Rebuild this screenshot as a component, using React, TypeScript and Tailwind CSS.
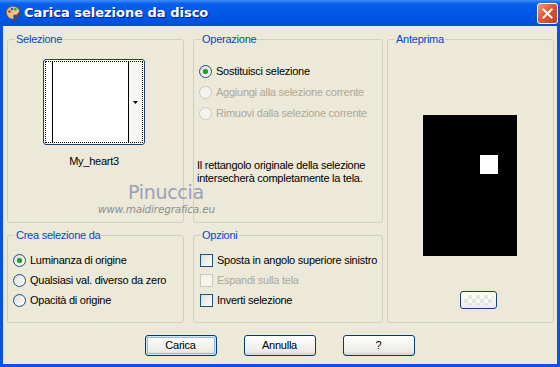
import React from 'react';

const Group: React.FC<{ label: string; className?: string; children?: React.ReactNode }> = ({ label, className, children }) => (
  <div className={`relative border border-[#d0d0bf] rounded-[3px] ${className ?? ''}`}>
    <span className="absolute left-[7px] -top-[8px] px-[1px] bg-[#ece9d8] text-[#0046d5] leading-[14px]">{label}</span>
    {children}
  </div>
);

const Radio: React.FC<{ checked?: boolean; disabled?: boolean; label: string }> = ({ checked, disabled, label }) => (
  <div className="flex items-center gap-[4px] h-[13px]">
    <span
      className={`w-[13px] h-[13px] rounded-full border flex items-center justify-center shrink-0 ${
        disabled
          ? 'border-[#cac8bb] bg-[#f4f3ee]'
          : 'border-[#1c5180] bg-[linear-gradient(135deg,#dcdcd7,#ffffff)]'
      }`}
    >
      {checked && <span className="w-[5px] h-[5px] rounded-full bg-[#21a121] shadow-[0_0_1px_#5ccf5c]" />}
    </span>
    <span className={`leading-[13px] whitespace-nowrap ${disabled ? 'text-[#aca899]' : 'text-black'}`}>{label}</span>
  </div>
);

const Check: React.FC<{ disabled?: boolean; label: string }> = ({ disabled, label }) => (
  <div className="flex items-center gap-[4px] h-[13px]">
    <span
      className={`w-[13px] h-[13px] border shrink-0 ${
        disabled ? 'border-[#cac8bb] bg-[#f4f3ee]' : 'border-[#1c5180] bg-[linear-gradient(135deg,#dcdcd7,#ffffff)]'
      }`}
    />
    <span className={`leading-[13px] whitespace-nowrap ${disabled ? 'text-[#aca899]' : 'text-black'}`}>{label}</span>
  </div>
);

const XpButton: React.FC<{ label: string; isDefault?: boolean }> = ({ label, isDefault }) => (
  <button
    className={`w-[72px] h-[21px] rounded-[3px] border border-[#003c74] bg-[linear-gradient(to_bottom,#ffffff_0%,#f4f4f0_45%,#ecebe6_80%,#d6d0c5_100%)] text-black leading-[13px] ${
      isDefault ? 'shadow-[inset_0_0_0_1px_#cee7ff,inset_0_0_0_2px_#98b8ea]' : ''
    }`}
  >
    {label}
  </button>
);

export default function App() {
  return (
    <div className="w-[560px] h-[367px] flex flex-col bg-[#0a52e0] font-['Liberation_Sans',Arial,sans-serif] text-[11px] tracking-[-0.25px] overflow-hidden">
      {/* title bar */}
      <div className="relative h-[26px] shrink-0 flex items-center bg-[linear-gradient(to_bottom,#3d8ff8_0%,#0a60ec_14%,#0057e8_50%,#0052e2_85%,#0a4cd0_100%)]">
        <svg width="16" height="16" viewBox="0 0 16 16" className="ml-[5px]">
          <path d="M8 1.5C4 1.5 1.5 4 1.5 7.5c0 3.5 2.6 6.5 6 6.5 1.6 0 1.6-1.4 1-2.2-.6-.9.1-1.9 1.2-1.9h1.6c2.1 0 3.2-1.3 3.2-3.2C14.5 3.7 11.6 1.5 8 1.5z" fill="#e9c58c" stroke="#8a5a22" strokeWidth="0.8" />
          <circle cx="4.5" cy="6.5" r="1.3" fill="#e0201c" />
          <circle cx="7" cy="4" r="1.3" fill="#2a56e8" />
          <circle cx="10.3" cy="4.3" r="1.3" fill="#2aa83a" />
          <circle cx="4.8" cy="10" r="1.3" fill="#f0d020" />
          <path d="M9.5 15l5-7.5" stroke="#7a3a12" strokeWidth="1.6" strokeLinecap="round" />
        </svg>
        <span className="ml-[3px] text-white font-bold text-[13px] tracking-normal font-['DejaVu_Sans',sans-serif] [text-shadow:1px_1px_0_#0a1e8a]">
          Carica selezione da disco
        </span>
        <div className="absolute right-[2px] top-[3px] w-[21px] h-[21px] rounded-[3px] border border-white bg-[linear-gradient(135deg,#f09a7c,#dd5a35_45%,#c23e1c)] flex items-center justify-center">
          <svg width="11" height="11" viewBox="0 0 11 11">
            <path d="M1.5 1.5l8 8M9.5 1.5l-8 8" stroke="#fff" strokeWidth="2" strokeLinecap="square" />
          </svg>
        </div>
      </div>

      {/* client area */}
      <div className="relative flex-1 mx-[3px] mb-[3px] bg-[#ece9d8] flex flex-col">
        <div className="flex pt-[13px] pl-[4px]">
          {/* left column */}
          <div className="w-[177px] flex flex-col gap-[12px]">
            <Group label="Selezione" className="h-[184px]">
              <div className="flex flex-col items-center w-[104px] ml-[34px] mt-[19px]">
                <div className="w-[102px] h-[86px] rounded-[3px] border border-[#1c3f70] bg-white p-[1px]">
                  <div className="h-full border border-dotted border-black flex">
                    <div className="w-[6px]" />
                    <div className="w-[1px] bg-black" />
                    <div className="flex-1 bg-white" />
                    <div className="w-[1px] bg-black" />
                    <div className="w-[13px] bg-[#f7f7f4] flex items-center justify-center">
                      <svg width="5" height="3" viewBox="0 0 5 3">
                        <path d="M0 0h5L2.5 3z" fill="#000" />
                      </svg>
                    </div>
                  </div>
                </div>
                <span className="mt-[10px] leading-[13px] text-black">My_heart3</span>
              </div>
            </Group>
            <Group label="Crea selezione da" className="h-[88px]">
              <div className="flex flex-col gap-[7px] pt-[18px] pl-[5px]">
                <Radio checked label="Luminanza di origine" />
                <Radio label="Qualsiasi val. diverso da zero" />
                <Radio label="Opacità di origine" />
              </div>
            </Group>
          </div>

          {/* middle column */}
          <div className="w-[190px] ml-[9px] flex flex-col gap-[12px]">
            <Group label="Operazione" className="h-[184px]">
              <div className="flex flex-col gap-[8px] pt-[25px] pl-[5px]">
                <Radio checked label="Sostituisci selezione" />
                <Radio disabled label="Aggiungi alla selezione corrente" />
                <Radio disabled label="Rimuovi dalla selezione corrente" />
              </div>
              <p className="mt-[39px] pl-[3px] leading-[13px] text-black">
                Il rettangolo originale della selezione
                <br />
                intersecherà completamente la tela.
              </p>
            </Group>
            <Group label="Opzioni" className="h-[88px]">
              <div className="flex flex-col gap-[7px] pt-[18px] pl-[6px]">
                <Check label="Sposta in angolo superiore sinistro" />
                <Check disabled label="Espandi sulla tela" />
                <Check label="Inverti selezione" />
              </div>
            </Group>
          </div>

          {/* right column */}
          <div className="w-[167px] ml-[4px]">
            <Group label="Anteprima" className="h-[284px]">
              <div className="flex flex-col items-start pl-[35px] pt-[75px]">
                <div className="w-[94px] h-[141px] bg-black pl-[57px] pt-[40px]">
                  <div className="w-[18px] h-[19px] bg-white" />
                </div>
                <div className="ml-[37px] mt-[35px] w-[37px] h-[18px] rounded-[3px] border border-[#1c3f70] bg-[linear-gradient(to_bottom,#ffffff,#ecebe6)] p-[3px]">
                  <div className="w-full h-full opacity-40 bg-[repeating-conic-gradient(#c8c8c8_0%_25%,#ffffff_0%_50%)] bg-[length:8px_8px] bg-[position:8px_0]" />
                </div>
              </div>
            </Group>
          </div>
        </div>

        {/* buttons */}
        <div className="flex justify-center gap-[27px] mt-[12px] pr-[1px]">
          <XpButton label="Carica" isDefault />
          <XpButton label="Annulla" />
          <XpButton label="?" />
        </div>

        {/* watermark */}
        <div className="absolute left-[125px] top-[155px] text-[#9d9eb8] text-[19px] tracking-[-0.3px] leading-[22px] font-['DejaVu_Sans',sans-serif] pointer-events-none">
          Pinuccia
        </div>
        <div className="absolute left-[95px] top-[177px] text-[#8e8e8e] text-[10.5px] tracking-[-0.2px] leading-[13px] font-['DejaVu_Sans',sans-serif] italic pointer-events-none">
          www.maidiregrafica.eu
        </div>
      </div>
    </div>
  );
}
